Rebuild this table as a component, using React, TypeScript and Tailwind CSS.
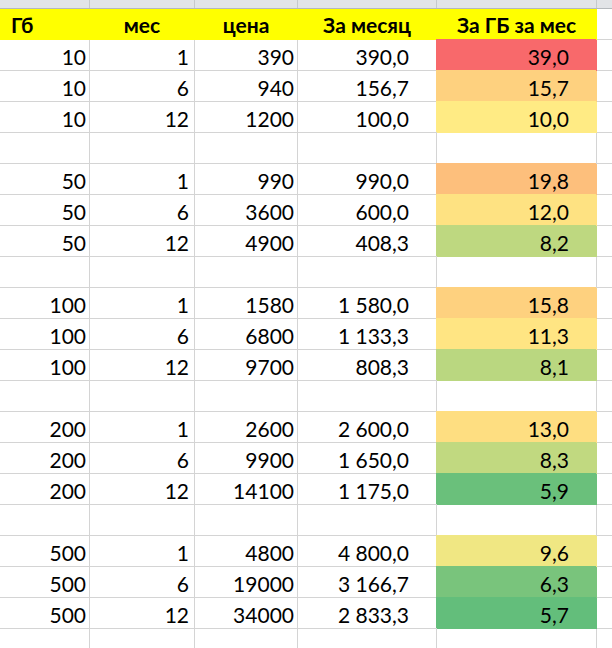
import React from 'react';

type Row = {
  gb: string;
  mon: string;
  price: string;
  perMonth: string;
  perGb: string;
  fill: string;
} | null;

const widths = ['w-[90px]', 'w-[105px]', 'w-[103px]', 'w-[139px]', 'w-[160px]'];
const letters = ['A', 'B', 'C', 'D', 'E'];

// colour scale red -> yellow -> green, like the sheet's conditional format
const rows: Row[] = [
  { gb: '10', mon: '1', price: '390', perMonth: '390,0', perGb: '39,0', fill: 'bg-[#F8696B] border-[#F8696B] shadow-[-1px_-1px_0_#F8696B]' },
  { gb: '10', mon: '6', price: '940', perMonth: '156,7', perGb: '15,7', fill: 'bg-[#FED17F] border-[#FED17F] shadow-[-1px_-1px_0_#FED17F]' },
  { gb: '10', mon: '12', price: '1200', perMonth: '100,0', perGb: '10,0', fill: 'bg-[#FFEB84] border-[#FFEB84] shadow-[-1px_-1px_0_#FFEB84]' },
  null,
  { gb: '50', mon: '1', price: '990', perMonth: '990,0', perGb: '19,8', fill: 'bg-[#FDBF7C] border-[#FDBF7C] shadow-[-1px_-1px_0_#FDBF7C]' },
  { gb: '50', mon: '6', price: '3600', perMonth: '600,0', perGb: '12,0', fill: 'bg-[#FEE282] border-[#FEE282] shadow-[-1px_-1px_0_#FEE282]' },
  { gb: '50', mon: '12', price: '4900', perMonth: '408,3', perGb: '8,2', fill: 'bg-[#BED880] border-[#BED880] shadow-[-1px_-1px_0_#BED880]' },
  null,
  { gb: '100', mon: '1', price: '1580', perMonth: '1 580,0', perGb: '15,8', fill: 'bg-[#FED17F] border-[#FED17F] shadow-[-1px_-1px_0_#FED17F]' },
  { gb: '100', mon: '6', price: '6800', perMonth: '1 133,3', perGb: '11,3', fill: 'bg-[#FFE583] border-[#FFE583] shadow-[-1px_-1px_0_#FFE583]' },
  { gb: '100', mon: '12', price: '9700', perMonth: '808,3', perGb: '8,1', fill: 'bg-[#BAD780] border-[#BAD780] shadow-[-1px_-1px_0_#BAD780]' },
  null,
  { gb: '200', mon: '1', price: '2600', perMonth: '2 600,0', perGb: '13,0', fill: 'bg-[#FEDE81] border-[#FEDE81] shadow-[-1px_-1px_0_#FEDE81]' },
  { gb: '200', mon: '6', price: '9900', perMonth: '1 650,0', perGb: '8,3', fill: 'bg-[#C1D980] border-[#C1D980] shadow-[-1px_-1px_0_#C1D980]' },
  { gb: '200', mon: '12', price: '14100', perMonth: '1 175,0', perGb: '5,9', fill: 'bg-[#6AC07B] border-[#6AC07B] shadow-[-1px_-1px_0_#6AC07B]' },
  null,
  { gb: '500', mon: '1', price: '4800', perMonth: '4 800,0', perGb: '9,6', fill: 'bg-[#F0E783] border-[#F0E783] shadow-[-1px_-1px_0_#F0E783]' },
  { gb: '500', mon: '6', price: '19000', perMonth: '3 166,7', perGb: '6,3', fill: 'bg-[#79C47C] border-[#79C47C] shadow-[-1px_-1px_0_#79C47C]' },
  { gb: '500', mon: '12', price: '34000', perMonth: '2 833,3', perGb: '5,7', fill: 'bg-[#63BE7B] border-[#63BE7B] shadow-[-1px_-1px_0_#63BE7B]' },
  null,
  null,
];

const Cell: React.FC<{ w: string; cls?: string; children?: React.ReactNode }> = ({ w, cls = 'border-[#d4d4d4]', children }) => (
  <div className={`flex h-full shrink-0 items-end border-r border-b ${w} ${cls}`}>{children}</div>
);

export default function App() {
  return (
    <div className="h-[648px] w-[612px] overflow-hidden bg-white font-['Lato','Liberation_Sans',sans-serif] text-[21px] text-black">
      {/* column letters, cut off at the top */}
      <div className="flex h-[9px] border-b border-[#b4b8bc] bg-[#e2e4e7]">
        {letters.map((l, i) => (
          <div
            key={l}
            className={`flex h-full shrink-0 overflow-hidden border-r border-[#c6c9cc] ${widths[i]} ${i === 0 ? 'justify-start pl-[19px]' : 'justify-center'}`}
          >
            <span className="-mt-[14px] text-[16px] leading-none text-[#444]">{l}</span>
          </div>
        ))}
        <div className="h-full flex-1" />
      </div>

      {/* header */}
      <div className="flex h-[31px] font-bold">
        <Cell w={`${widths[0]} pl-[11px] pb-[4px]`} cls="bg-[#ffff00] border-[#ffff00]">
          <span className="leading-none">Гб</span>
        </Cell>
        <Cell w={`${widths[1]} justify-center pb-[4px]`} cls="bg-[#ffff00] border-[#ffff00]">
          <span className="leading-none">мес</span>
        </Cell>
        <Cell w={`${widths[2]} justify-center pb-[4px]`} cls="bg-[#ffff00] border-[#ffff00]">
          <span className="leading-none">цена</span>
        </Cell>
        <Cell w={`${widths[3]} justify-center pb-[4px]`} cls="bg-[#ffff00] border-[#ffff00]">
          <span className="leading-none">За месяц</span>
        </Cell>
        <Cell w={`${widths[4]} justify-center pb-[4px]`} cls="bg-[#ffff00] border-[#ffff00]">
          <span className="leading-none">За ГБ за мес</span>
        </Cell>
        <Cell w="w-[40px]" />
      </div>

      {rows.map((r, i) => (
        <div key={i} className="flex h-[31px]">
          <Cell w={`${widths[0]} justify-end pr-[3px] pb-[3px]`}>
            <span className="leading-none">{r?.gb}</span>
          </Cell>
          <Cell w={`${widths[1]} justify-end pr-[5px] pb-[3px]`}>
            <span className="leading-none">{r?.mon}</span>
          </Cell>
          <Cell w={`${widths[2]} justify-end pr-[3px] pb-[3px]`}>
            <span className="leading-none">{r?.price}</span>
          </Cell>
          <Cell w={`${widths[3]} justify-end pr-[27px] pb-[3px]`}>
            <span className="leading-none">{r?.perMonth}</span>
          </Cell>
          <Cell w={`${widths[4]} justify-end pr-[27px] pb-[3px]`} cls={r ? r.fill : undefined}>
            <span className="leading-none">{r?.perGb}</span>
          </Cell>
          <Cell w="w-[40px]" />
        </div>
      ))}
    </div>
  );
}
